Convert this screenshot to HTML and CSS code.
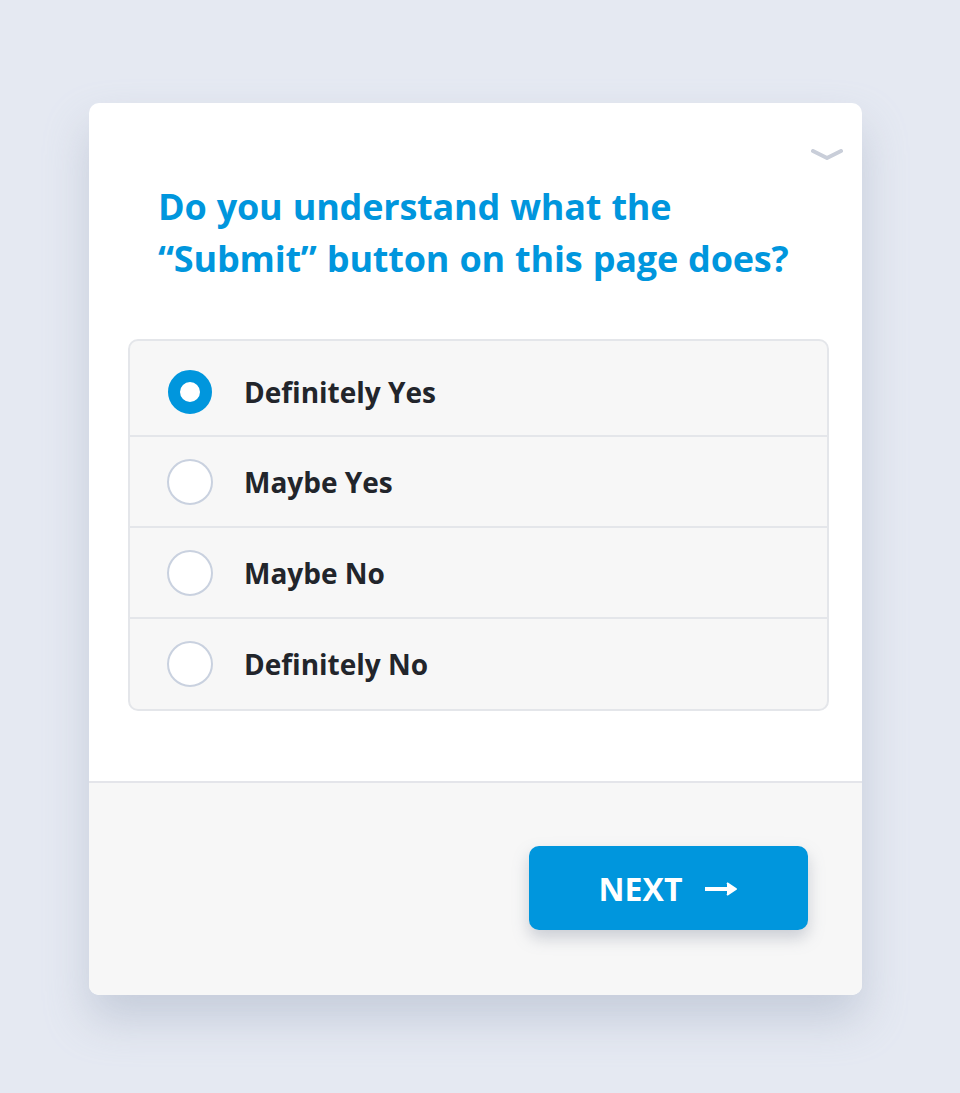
FILE: index.html
```html
<!DOCTYPE html>
<html>
<head>
    <title>Survey</title>
    <link rel="stylesheet" href="styles.css">
</head>
<body>
    <div class="card">
        <div class="card-body">
            <button class="collapse" type="button" aria-label="Collapse">
                <svg width="32" height="12" viewBox="0 0 32 12"><path d="M2 2 L16 9 L30 2" fill="none" stroke="#c9ced9" stroke-width="4" stroke-linecap="round" stroke-linejoin="round"/></svg>
            </button>
            <h2 class="question">Do you understand what the<br>“Submit” button on this page does?</h2>
            <form class="options" id="survey-form">
                <label class="option">
                    <input type="radio" name="answer" value="definitely-yes" checked>
                    <span class="radio"></span>
                    <span class="option-text">Definitely Yes</span>
                </label>
                <label class="option">
                    <input type="radio" name="answer" value="maybe-yes">
                    <span class="radio"></span>
                    <span class="option-text">Maybe Yes</span>
                </label>
                <label class="option">
                    <input type="radio" name="answer" value="maybe-no">
                    <span class="radio"></span>
                    <span class="option-text">Maybe No</span>
                </label>
                <label class="option">
                    <input type="radio" name="answer" value="definitely-no">
                    <span class="radio"></span>
                    <span class="option-text">Definitely No</span>
                </label>
            </form>
        </div>
        <div class="card-footer">
            <button class="next-button" type="button">
                NEXT
                <svg class="arrow" width="34" height="16" viewBox="0 0 34 16"><path d="M1 8 H28" stroke="#ffffff" stroke-width="4"/><path d="M23 2 L32 8 L23 14" fill="#ffffff" stroke="#ffffff" stroke-width="2" stroke-linejoin="round"/></svg>
            </button>
        </div>
    </div>
</body>
</html>
```

FILE: styles.css
```css
body {
    margin: 0;
    padding: 103px 0 98px 89px;
    background-color: #e5e9f2;
    font-family: 'Open Sans', 'Lato', sans-serif;
    font-weight: 700;
}

.card {
    width: 773px;
    background: #ffffff;
    border-radius: 10px;
    overflow: hidden;
    box-shadow: 0 24px 44px rgba(160, 170, 190, 0.45);
}

.card-body {
    position: relative;
    padding: 78px 33px 70px 39px;
    border-bottom: 2px solid #e4e5ea;
}

.collapse {
    position: absolute;
    top: 46px;
    right: 19px;
    padding: 0;
    border: none;
    background: none;
    cursor: pointer;
}

.collapse svg {
    display: block;
}

.question {
    margin: 0 0 54px 30px;
    color: #0096dd;
    font-size: 36px;
    line-height: 52px;
    font-weight: 700;
    letter-spacing: -0.2px;
    word-spacing: 1px;
}

.options {
    background: #f7f7f7;
    border: 2px solid #e4e6ea;
    border-radius: 10px;
}

.option {
    display: flex;
    align-items: center;
    height: 89px;
    padding-left: 37px;
    border-top: 2px solid #e4e6ea;
    cursor: pointer;
}

.option:first-child {
    border-top: none;
    height: 86px;
    padding-top: 8px;
}

.option:last-child {
    height: 90px;
}

.option input {
    display: none;
}

.radio {
    box-sizing: border-box;
    width: 46px;
    height: 46px;
    border: 2px solid #c9d1df;
    border-radius: 50%;
    background: #ffffff;
    margin-right: 31px;
    flex-shrink: 0;
}

.option input:checked + .radio {
    border: 12px solid #0096dd;
    width: 44px;
    height: 44px;
    margin-left: 1px;
    margin-right: 32px;
}

.option-text {
    color: #22252b;
    font-size: 28px;
}

.card-footer {
    background: #f7f7f7;
    display: flex;
    justify-content: flex-end;
    padding: 63px 54px 65px 0;
}

.next-button {
    display: flex;
    align-items: center;
    justify-content: center;
    width: 279px;
    height: 84px;
    border: none;
    border-radius: 10px;
    background: #0096dd;
    color: #ffffff;
    font-family: 'Open Sans', 'Lato', sans-serif;
    font-weight: 700;
    font-size: 32px;
    box-shadow: 0 8px 16px rgba(120, 130, 150, 0.35);
    cursor: pointer;
}

.next-button .arrow {
    margin-left: 22px;
    margin-top: 2px;
}
```
